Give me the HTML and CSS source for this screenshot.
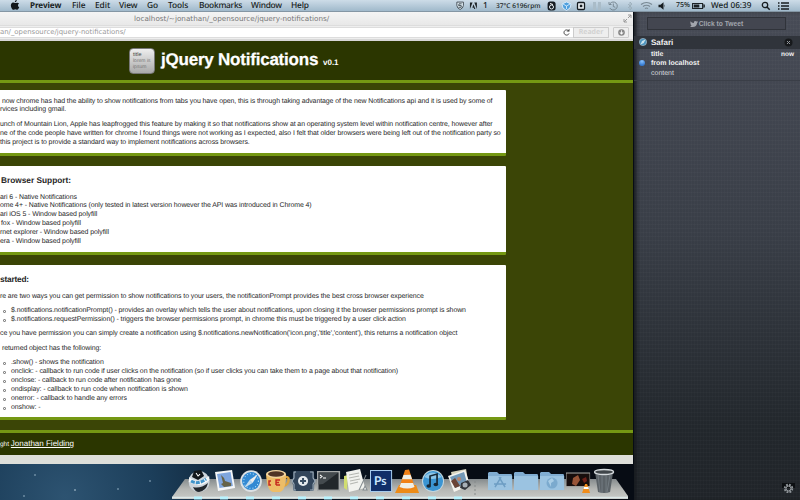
FILE: index.html
```html
<!DOCTYPE html>
<html lang="en">
<head>
<meta charset="utf-8">
<title>jQuery Notifications</title>
<link rel="stylesheet" href="styles.css">
</head>
<body>
<div class="screen">
  <header class="menubar">
    <svg class="apple" width="10" height="11" viewBox="0 0 10 11"><path d="M6.8 0C5.4.2 4.7 1.2 4.9 2.3 6 2.2 6.9 1.2 6.8 0ZM5 3.1C4.2 2.7 3.4 2.3 2.3 2.8.4 3.7.5 6.6 1.9 8.7c1 1.6 1.7 1 2.8.7 1.1-.4 1.8.9 3 .2.7-.5 1.2-1.5 1.5-2.3-1.7-.8-1.6-2.9-.1-3.7C7.900 2.1 6.300 2.700 5 3.100Z"/></svg>
    <nav class="menus"><b class="m1">Preview</b><span class="m2">File</span><span class="m3">Edit</span><span class="m4">View</span><span class="m5">Go</span><span class="m6">Tools</span><span class="m7">Bookmarks</span><span class="m8">Window</span><span class="m9">Help</span></nav>
    <svg class="tray-a" width="31" height="12" viewBox="0 0 31 12"><path d="M1 1.500h7.500v4Q8 8.800 4.700 10 1.500 8.800 1 5.500Z" fill="#e0edf4" stroke="#3a434a"/><path d="M6.500 3.500h-3l-.5 2h3v2H3" fill="none" stroke="#3a434a"/><path d="M16 2h3l-3 7.500ZM24 2h-3l3 7.500ZM20 4l2.200 5.500h-1.300l-.5-1.500h-1.600Z" fill="#1c2226"/></svg>
    <span class="one">1</span><span class="temp">37°C 6196rpm</span>
    <svg class="tray-b" width="130" height="12" viewBox="0 0 130 12">
      <rect x=".6" y="1.500" width="8" height="9" rx="2.500" fill="#151b20"/><circle cx="4.500" cy="7" r="2" fill="none" stroke="#e7eff4"/><path d="M3 3.500 6 4.500" stroke="#fff"/>
      <path d="M19.500 2 15 4l1 4 3.500 2.500L23 8l1-4ZM16 4l3.500 2L23 4M19.500 6v3" fill="#4e9fdd" stroke="#e5f4ff" stroke-width=".8"/>
      <rect x="30.500" y="2.500" width="7" height="7" rx="1" fill="#f0f5f8" stroke="#151b20" stroke-width="1.300"/><rect x="32.800" y="4.700" width="2.500" height="2.500" fill="#151b20"/>
      <path d="M46 2h3v8h-3zM51 2h3v8h-3z" fill="#aabcc8"/>
      <g fill="none" stroke="#788893"><path d="M63 3.700a4 4 0 1 1-.2 4.300M62 2v2.500h2.500M66.300 3.500v3l2 .8"/><path d="m81 4 4 4-2 2V2l2 2-4 4" stroke="#9bacb7" stroke-width=".8"/></g>
      <g fill="none" stroke="#788893" stroke-width="1.200"><path d="M94 4.500q5.500-4 11 0M96 6.500q3.500-2.500 7 0"/><path d="M98 8.500q1.500-1 3 0"/></g>
      <path d="M111.500 4.700h2l3-2.500v7.500l-3-2.500h-2ZM117.300 4.300q1 1.600 0 3.200" fill="#171d21"/>
    </svg>
    <span class="pct">75%</span>
    <svg class="battery" width="13" height="8" viewBox="0 0 13 8"><path d="M.6 1.500h10v5H.6zM11 3h1.300v2H11" fill="none" stroke="#1b2125" stroke-width="1.100"/><path d="M1.800 2.500h5.500v3H1.800z" fill="#1b2125"/></svg>
    <span class="clock">Wed 06:39</span>
    <svg class="tray-c" width="30" height="12" viewBox="0 0 30 12" fill="none" stroke="#171d21"><circle cx="4" cy="5" r="2.700" stroke-width="1.300"/><path d="m6 7 2.700 2.700" stroke-width="1.500"/><path d="M20 3h8M20 6h8M20 9h8M17 3h1.500M17 6h1.500M17 9h1.500" stroke-width="1.400"/></svg>
  </header>

  <div class="desktop">
    <main class="browser">
      <div class="titlebar"><span>localhost/~jonathan/_opensource/jquery-notifications/</span>
        <svg width="9" height="9" viewBox="0 0 9 9" fill="none" stroke="#999"><path d="M5 1h3v3M8 1 5 4M4 8H1V5M1 8l3-3"/></svg></div>
      <div class="toolbar">
        <div class="address"><span>an/_opensource/jquery-notifications/</span>
          <svg width="9" height="9" viewBox="0 0 9 9"><path d="M6.700 3A2.600 2.600 0 1 0 7 5.500" fill="none" stroke="#4d4d4d"/><path d="M4.500 3.500h3V.8z" fill="#4d4d4d"/></svg></div>
        <div class="reader">Reader</div>
        <div class="download"><svg width="9" height="9" viewBox="0 0 9 9"><circle cx="4.500" cy="4.500" r="3.300" fill="#888"/><path d="M4.500 2.300v3M3 4.500 4.500 6.300 6 4.500" fill="#fff" stroke="#fff" stroke-width=".8"/></svg></div>
      </div>
      <div class="page">
        <div class="banner"><div class="logo"><b>title</b><i>lorem is<br>ipsum</i></div><h1>jQuery Notifications</h1><small>v0.1</small></div>
        <div class="content">
          <section class="card intro">
            <p class="s2">now chrome has had the ability to show notifications from tabs you have open, this is through taking advantage of the new Notifications api and it is used by some of</p>
            <p>rvices including gmail.</p>
            <p class="gap">unch of Mountain Lion, Apple has leapfrogged this feature by making it so that notifications show at an operating system level within notification centre, however after</p>
            <p>ne of the code people have written for chrome I found things were not working as I expected, also I felt that older browsers were being left out of the notification party so</p>
            <p>this project is to provide a standard way to implement notifications across browsers.</p>
          </section>
          <section class="card support">
            <h2 class="s1">Browser Support:</h2>
            <p>ari 6 - Native Notifications</p>
            <p>ome 4+ - Native Notifications (only tested in latest version however the API was introduced in Chrome 4)</p>
            <p>ari iOS 5 - Window based polyfill</p>
            <p class="s1">fox - Window based polyfill</p>
            <p>rnet explorer - Window based polyfill</p>
            <p>era - Window based polyfill</p>
          </section>
          <section class="card started">
            <h2>started:</h2>
            <p>re are two ways you can get permission to show notifications to your users, the notificationPrompt provides the best cross browser experience</p>
            <ul><li>$.notifications.notificationPrompt() - provides an overlay which tells the user about notifications, upon closing it the browser permissions prompt is shown</li>
            <li>$.notifications.requestPermission() - triggers the browser permissions prompt, in chrome this must be triggered by a user click action</li></ul>
            <p>ce you have permission you can simply create a notification using $.notifications.newNotification('icon.png','title','content'), this returns a notification object</p>
            <p class="s2 gap">returned object has the following:</p>
            <ul><li>.show() - shows the notification</li><li>onclick: - callback to run code if user clicks on the notification (so if user clicks you can take them to a page about that notification)</li><li>onclose: - callback to run code after notification has gone</li><li>ondisplay: - callback to run code when notification is shown</li><li>onerror: - callback to handle any errors</li><li>onshow: -</li></ul>
          </section>
        </div>
        <footer>ght <a>Jonathan Fielding</a></footer>
      </div>
    </main>

    <div class="dock">
      <svg class="shelf" width="456" height="22" viewBox="0 0 456 22"><defs><linearGradient id="sh" x2="0" y2="1"><stop stop-color="#858b8d"/><stop offset=".5" stop-color="#b5b7b4"/><stop offset="1" stop-color="#c8cac7"/></linearGradient></defs><path d="M13 1h431l12 17v3H0v-2Z" fill="url(#sh)"/><path d="M0 19.500h456" stroke="#dce8e8" stroke-width="1.500"/><path d="M303 3v14" stroke="#858a8a" stroke-dasharray="2 2"/><path d="M22 20h8M48 20h8M74 20h8M100 20h8M126 20h8M152 20h8M178 20h8M204 20h8M230 20h8M256 20h8M282 20h8" stroke="#b9f4ff" stroke-width="3"/></svg>
      <div class="icons">
        <svg viewBox="0 0 26 26"><circle cx="13" cy="13.500" r="10.500" fill="#cdd5dc"/><path d="M3 9Q12 17 23 8l.5 4Q14 21 3 14Z" fill="#f4f7f9"/><path d="M5 13q7 4 15-2" stroke="#3f93ca" stroke-width="3" stroke-dasharray="4 1" fill="none"/><path d="M7 19q7 2 15-4-2 8-9 9-4 0-6-5Z" fill="#22282e"/><path d="M8 3l7-1 3 6-6 4-6-3Z" fill="#11161b"/><path d="m10 5 2 3 2-2" stroke="#fff" fill="none"/></svg>
        <svg viewBox="0 0 26 26"><path d="m3 4 17-2 3 18-17 3Z" fill="#f5f7f8"/><path d="m5 6 13.500-2 2.300 14L7.500 20Z" fill="#7fa6dd"/><path d="M9 7q3 2 4 6l6 2v3l-7 1-3-3 2-1Z" fill="#666348"/></svg>
        <svg viewBox="0 0 26 26"><circle cx="13" cy="13" r="10.800" fill="#dce1e4"/><circle cx="13" cy="13" r="9" fill="#3289d3"/><circle cx="13" cy="13" r="7.300" fill="none" stroke="#b8e5fb" stroke-dasharray="1 2"/><path d="m20 6-5.500 9-3-3Z" fill="#eee"/><path d="m6 20 5.500-8 3 3Z" fill="#c6dded"/></svg>
        <svg viewBox="0 0 26 26"><path d="M20 9q6-1 4 5-1 4-7 4" fill="none" stroke="#dda33d" stroke-width="2.500"/><path d="M2 6q1 17 7 18h7q6-2 6-18Z" fill="#edbd68"/><ellipse cx="12" cy="6" rx="10" ry="4" fill="#f2d5a1"/><ellipse cx="12" cy="6" rx="8" ry="2.800" fill="#503525"/><path d="M7 13H5v4h2M12 17v-5h4m-4 2.500h3m-3 2.500h4" fill="none" stroke="#c62b20" stroke-width="1.500"/></svg>
        <svg viewBox="0 0 26 26"><path d="M5 3h17q2 0 2 2v4l1 4-1 4v4q0 2-2 2H5q-2 0-2-2v-4l-1-4 1-4V5q0-2 2-2Z" fill="#33465b"/><path d="M6 4H4v6l-2 3 2 3v6h2M20 4h3v6l2 3-2 3v6h-3" fill="none" stroke="#a5b4c0"/><circle cx="13" cy="13" r="5" fill="#e5eaed"/><path d="M13 10v6m-3-3h6" stroke="#394e63" stroke-width="2"/></svg>
        <svg viewBox="0 0 26 26"><path d="M1 3h23v20H1z" fill="#a7aaaa"/><path d="M2.500 4.500h20v17h-20z" fill="#22272b"/><path d="M2.500 4.500h20L7 16l-4.500.5z" fill="#444a4e"/><path d="m4 7 2 1.500L4 10M7 10h3" fill="none" stroke="#fff"/></svg>
        <svg viewBox="0 0 26 26"><path d="m2 8 4-1-1 15-3-2Z" fill="#d1dd70"/><path d="m4 4 14-3 5 19-16 4Z" fill="#f1f2ee"/><path d="m7 7 10-2M7 10l10-2M8 13l10-2M8 16l8-2" stroke="#b4b6b1"/><path d="m24 7-7 15M23 18l2 4h-4Z" fill="#eee" stroke="#838b8f"/></svg>
        <svg viewBox="0 0 26 26"><path d="M2.500 2.500h21v21h-21z" fill="#112f69" stroke="#a7cbed"/><text x="6" y="17" fill="#c9e5ff" font-family="Lato,sans-serif" font-weight="700" font-size="12">Ps</text></svg>
        <svg viewBox="0 0 26 26"><path d="M5 17h17l3 8H1Z" fill="#ec8b17"/><path d="m11 2 4-.5L21 20q-8 4-16 0Z" fill="#f18117"/><path d="m9.500 7 7-.3 1.500 4.500H8ZM7 15h12l1.500 4q-7 3-15 0Z" fill="#efefe8"/></svg>
        <svg viewBox="0 0 26 26"><circle cx="13" cy="13" r="11" fill="#c3d6de"/><circle cx="13" cy="13" r="10" fill="#3b95d3"/><path d="M4 9q8-9 18 0-10 4-18 0" fill="#8bc5e8"/><path d="M10 17.500V8l7-2v10" fill="none" stroke="#172836" stroke-width="1.700"/><ellipse cx="8.700" cy="18" rx="2.300" ry="1.800" fill="#172836"/><ellipse cx="15.800" cy="16.500" rx="2.300" ry="1.800" fill="#172836"/></svg>
        <svg viewBox="0 0 26 26"><path d="m5 4 15-3 3 18-14 4Z" fill="#d7d3bd"/><path d="m2 8 17-6 5 15-16 7Z" fill="#f4f3ee"/><path d="m4 9 14-5 3 11-12 5Z" fill="#7399b8"/><path d="m5 13 4-3 5 8-5 2Z" fill="#6b4436"/><circle cx="13" cy="11" r="2" fill="#ba846a"/><path d="m15 15 7-3 3 5-6 5-5-2Z" fill="#31353a"/><circle cx="19" cy="17" r="2.500" fill="#a8b0b6"/></svg>
        <span class="divider"></span>
        <svg viewBox="0 0 26 26"><path d="M2 4h8l2 2h12q1 0 1 2v14H1V5Z" fill="#80acd1"/><path d="M1 8h24v14H1z" fill="#9bc3e1"/><path d="m8 19 6-10M12 9l6 10M7 16h12" fill="none" stroke="#6d9dc3" stroke-width="1.500"/></svg>
        <svg viewBox="0 0 26 26"><path d="M2 4h8l2 2h12q1 0 1 2v14H1V5Z" fill="#80acd1"/><path d="M1 8h24v14H1z" fill="#9bc3e1"/></svg>
        <svg viewBox="0 0 26 26"><path d="M2 4h8l2 2h12q1 0 1 2v14H1V5Z" fill="#80acd1"/><path d="M1 8h24v14H1z" fill="#9bc3e1"/><circle cx="13" cy="15" r="5.500" fill="#7baace"/><path d="m9 13 4-3 2 3-3 2v4Z" fill="#a9cde6"/></svg>
        <svg viewBox="0 0 26 26"><path d="M1 4.500h24v14H1z" fill="#aaaaa6"/><path d="M1.500 5.500h23V18h-23z" fill="#170e0d"/><path d="m8 10 5-3 2 5-4 6-4-2Z" fill="#985437"/><path d="m17 11 4-2 1 4-3 2Z" fill="#6d2019"/><path d="m20 16 2 0 3 9h-8Z" fill="#f08d1c"/><path d="m19 19h4l.7 2h-5.200Z" fill="#fff"/></svg>
        <svg viewBox="0 0 26 26"><path d="M4 4h18l-3 20q-6 2-12 0Z" fill="#5b6267"/><path d="m7 7 2 17M11 7v18M15 7v18M19 7l-3 17" stroke="#798288" stroke-width=".8"/><ellipse cx="13" cy="4" rx="9.500" ry="2.500" fill="#40464a" stroke="#d5dadd" stroke-width="1.300"/></svg>
      </div>
    </div>
  </div>

  <aside class="notifications">
    <button class="tweet"><svg width="8" height="8" viewBox="0 0 9 8"><path d="M.5 1Q2 3 4.300 2.800 4 .5 6 .5q1 0 1.500.6L9 .8l-.8 1.300L9 2l-1 1Q7.500 7.500 3 7.500 1 7.500 0 6.500q1.500 0 2-.7-1.300-.2-1.500-1.300h.7Q0 3.500.5 1Z" fill="#a2a5ad"/></svg>Click to Tweet</button>
    <div class="app"><svg width="8" height="8" viewBox="0 0 8 8"><circle cx="4" cy="4" r="3.600" fill="#4a93bf" stroke="#a7bdc9" stroke-width=".7"/><path d="M6.500 1.500 4.800 5 3 3ZM1.500 6.500 3 3l2 2Z" fill="#cce5ed"/></svg><b>Safari</b><svg width="9" height="9" viewBox="0 0 9 9"><circle cx="4.500" cy="4.500" r="4" fill="#17191c"/><path d="m3 3 3 3m0-3L3 6" stroke="#92969c"/></svg></div>
    <div class="notice"><i class="dot"></i><div class="message"><b>title</b><b>from localhost</b><span>content</span></div><b class="now">now</b></div>
    <svg class="gear" width="13" height="10" viewBox="0 0 13 10"><path d="M0 0h13v5H0z" fill="#0c0f12"/><circle cx="6.500" cy="5.500" r="3.800" fill="none" stroke="#90969b" stroke-width="1.800" stroke-dasharray="1.800 1.200"/><circle cx="6.500" cy="5.500" r="2.500" fill="none" stroke="#a1a6aa"/></svg>
  </aside>
</div>
</body>
</html>
```
FILE: styles.css
```css
* { box-sizing: border-box; }
body { margin: 0; font-family: "Liberation Sans", sans-serif; text-rendering: geometricPrecision; }
h1, h2, p, ul { margin: 0; padding: 0; font-weight: normal; }
svg { display: block; flex: none; }
.screen { width: 800px; height: 500px; overflow: hidden; display: grid; grid-template: 12px 488px / 634px 166px; }

.menubar { grid-column: 1 / 3; display: flex; align-items: center; height: 12px; background: linear-gradient(#cddce8, #a0b9cb); border-bottom: 1px solid #8496a4; color: #161c21; font: 500 8.4px/12px "Noto Sans", sans-serif; white-space: nowrap; z-index: 1; }
.apple { margin-left: 10px; fill: #12171b; }
.menus { display: flex; margin-left: 10px; width: 425px; letter-spacing: -.08px; }
.m1 { width: 42px; font-size: 8.1px; }
.m2 { width: 23px; } .m3 { width: 24px; } .m4 { width: 28px; } .m5 { width: 21px; }
.m6 { width: 31px; } .m7 { width: 52px; letter-spacing: -.25px; } .m8 { width: 40px; letter-spacing: -.25px; } .m9 { letter-spacing: -.2px; }
.tray-a { margin-left: 1px; width: 27px; }
.one { width: 13px; }
.temp { font-size: 6.6px; width: 52px; }
.tray-b { margin-left: -1px; }
.pct { font-size: 7px; width: 15px; margin-left: -1px; }
.battery { margin-left: 1px; }
.clock { margin-left: 6px; width: 50px; font-size: 8.200px; }

.desktop { display: grid; background:
  radial-gradient(circle at 75px 478px, #9db5c5 0 .5px, transparent 1px),
  radial-gradient(circle at 24px 484px, #7f9db2 0 .5px, transparent 1px),
  radial-gradient(circle at 35px 463px, #7f9db2 0 .5px, transparent 1px),
  radial-gradient(circle at 118px 477px, #7f9db2 0 .5px, transparent 1px),
  radial-gradient(circle at 150px 469px, #7f9db2 0 .5px, transparent 1px),
  radial-gradient(circle at 65px 485px, #2d5371 0, #1c3e5a 90px, #0c1e30 190px, #070c14 350px); }
.browser { grid-area: 1 / 1; width: 633px; height: 452px; background: #dedfda; overflow: hidden; }
.titlebar { height: 14px; display: flex; justify-content: flex-end; align-items: center; background: linear-gradient(#f4f4f4, #e8e8e8); border-bottom: 1px solid #ddd; padding-right: 1px; font: 7.23px/13px "DejaVu Sans", sans-serif; color: #777; }
.titlebar span { width: 489px; white-space: nowrap; }
.toolbar { height: 15px; display: flex; align-items: center; background: #eee; border-bottom: 2px solid #d7d7d7; }
.address { width: 573px; height: 11px; display: flex; align-items: center; justify-content: space-between; background: #fff; border: solid #ddd; border-width: 1px 0; padding-right: 2px; font: 6.9px/9px "DejaVu Sans", sans-serif; color: #999; }
.reader { width: 36px; height: 11px; border: 1px solid #ccc; text-align: center; font: bold 7px/9px "Noto Sans", sans-serif; color: #d2d2d2; }
.download { width: 16px; height: 11px; margin-left: 4px; border: 1px solid #ccc; border-radius: 1px; display: grid; place-items: center; }
.page { height: 414px; background: #3b4506; display: flex; flex-direction: column; }
.banner { height: 42px; background: #2b3600; border-bottom: 3px solid #759813; display: flex; align-items: flex-start; color: #fff; }
.logo { margin: 7px 0 0 129px; width: 26px; height: 26px; border: 1px solid #777; border-radius: 4px; background: linear-gradient(#eee, #a9a9a9); color: #444; padding: 3px 3px; font-size: 5.500px; line-height: 6px; }
.logo b { display: block; font-weight: normal; }
.logo i { font-style: normal; display: block; color: #777; font-size: 5px; white-space: nowrap; }
.banner h1 { font-weight: bold; font-size: 17px; letter-spacing: -.22px; line-height: 20px; margin: 9px 0 0 6px; width: 162px; white-space: nowrap; -webkit-text-stroke: .25px; }
.banner small { font-weight: bold; font-size: 8px; line-height: 10px; margin-top: 17px; }
.content { flex: 1; display: flex; flex-direction: column; padding-top: 7px; }
.card { width: 506px; background: #fff; border-bottom: 3px solid #759813; border-radius: 0 1px 1px 0; color: #262626; font-size: 6.95px; letter-spacing: -.08px; line-height: 8.9px; white-space: nowrap; }
.intro { height: 66px; padding-top: 7.500px; }
.support { height: 89px; padding-top: 9px; margin-top: 10px; }
.started { height: 155px; padding-top: 9px; margin-top: 10px; }
.gap { margin-top: 5.500px; }
.s2 { margin-left: 2px; }
.s1 { margin-left: 1px; }
.card h2 { font-size: 8.3px; letter-spacing: 0; font-weight: bold; line-height: 11px; margin-bottom: 7.500px; }
.started h2 { margin-bottom: 7.500px; letter-spacing: -.2px; }
.card ul { list-style: none; margin: 5.500px 0; }
.card li { padding-left: 11px; display: flex; align-items: center; position: relative; }
.card li::before { content: ""; position: absolute; left: 3px; box-sizing: border-box; width: 3px; height: 3px; border: 1px solid #888; border-radius: 1px; }
.page footer { height: 25px; flex: none; border-top: 3px solid #759813; background: #2b3600; color: #fff; font-size: 6.5px; line-height: 22px; }
.page footer a { font-size: 8px; text-decoration: underline; }

.dock { grid-area: 1 / 1; align-self: end; display: grid; width: 456px; height: 32px; margin-left: 172px; z-index: 1; }
.shelf { grid-area: 1 / 1; align-self: end; }
.icons { grid-area: 1 / 1; display: flex; margin-left: 13.500px; }
.icons svg { width: 26.1px; height: 26.1px; }
.divider { width: 14px; }

.notifications { background: repeating-linear-gradient(90deg, rgba(255,255,255,.015) 0 1px, transparent 1px 3px), repeating-linear-gradient(rgba(255,255,255,.02) 0 1px, transparent 1px 4px), linear-gradient(#474b56, #393e47 45%, #22272c 85%, #202429); box-shadow: inset 4px 0 4px -2px #15181c; display: flex; flex-direction: column; color: #f0f0f1; }
.tweet { margin: 5px 0 0 13px; width: 139px; height: 13px; padding: 0; display: flex; align-items: center; justify-content: center; gap: 1px; background: #434650; border: 1px solid #30333a; color: #a2a5ad; font: bold 6.7px/10px "Liberation Sans", sans-serif; }
.app { height: 13px; margin-top: 5.500px; padding: 0 7px 0 5px; display: flex; align-items: center; background: #30343b; font-size: 8px; }
.app b { flex: 1; margin-left: 4px; }
.notice { display: flex; margin-top: 1px; height: 31px; border-bottom: 1px solid #3a3e47; font-size: 7px; line-height: 8.8px; padding: 1.500px 6px 0 5px; }
.dot { width: 6px; height: 6px; border-radius: 50%; background: radial-gradient(circle at 50% 20%, #8bc4ff, #347ad1 70%); margin: 9px 6px 0 0; }
.message { flex: 1; display: flex; flex-direction: column; }
.message span { color: #d7d9dd; line-height: 9.500px; }
.now { font-size: 6.5px; }
.gear { margin: auto 5px 7px auto; }
```
